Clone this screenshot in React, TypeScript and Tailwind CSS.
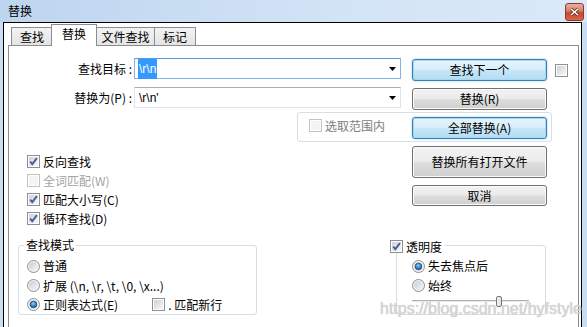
import React from "react";

const cjk = "font-['Noto_Sans_CJK_SC','Liberation_Sans',sans-serif]";

function CheckBox({ checked, disabled }: { checked?: boolean; disabled?: boolean }) {
  return (
    <svg width="13" height="13" viewBox="0 0 13 13" className="shrink-0 block">
      <rect x="0.5" y="0.5" width="12" height="12" fill="#fff" stroke={disabled ? "#c2c2c2" : "#8e8f8f"} />
      <rect x="2" y="2" width="9" height="9" fill={disabled ? "#f4f4f4" : "url(#cbIn)"} />
      {checked && (
        <path d="M3.2 6.6 L5.3 9.2 L9.9 3.2" stroke="#4a5f97" strokeWidth="1.9" fill="none" strokeLinejoin="miter" />
      )}
    </svg>
  );
}

function Radio({ checked }: { checked?: boolean }) {
  return (
    <svg width="13" height="13" viewBox="0 0 13 13" className="shrink-0 block">
      <circle cx="6.5" cy="6.5" r="6" fill="#f4f4f4" stroke="#8e8f8f" />
      <circle cx="6.5" cy="6.5" r="4.6" fill="url(#rbIn)" />
      {checked && <circle cx="6.5" cy="6.5" r="3.3" fill="url(#rbDot)" stroke="#1b4a78" strokeWidth="0.8" />}
    </svg>
  );
}

function Btn({ children, h, focus }: { children: React.ReactNode; h: string; focus?: boolean }) {
  return (
    <div
      className={`w-[135px] ${h} shrink-0 rounded-[3px] border flex items-center justify-center text-[12px] leading-none text-black ${
        focus
          ? "border-[#3c7fb1] bg-[linear-gradient(#e6f4fc_0%,#d8eefb_48%,#c6e6f8_52%,#b3dcf3_100%)] shadow-[inset_0_0_0_1px_#a6d8f4,0_0_2px_#7fc3ee]"
          : "border-[#707070] bg-[linear-gradient(#f2f2f2_0%,#ebebeb_48%,#dddddd_52%,#cfcfcf_100%)] shadow-[inset_0_0_0_1px_#fbfbfb]"
      }`}
    >
      {children}
    </div>
  );
}

function Combo({ focus, children }: { focus?: boolean; children: React.ReactNode }) {
  return (
    <div
      className={`ml-[1px] w-[267px] h-[21px] shrink-0 flex items-center bg-white border ${
        focus
          ? "border-[#7eb4ea] border-t-[#569de5]"
          : "border-[#e2e3ea] border-t-[#abadb3]"
      }`}
    >
      <div className="flex-1 pl-[3px] text-[12px] leading-none font-['Liberation_Sans',sans-serif]">{children}</div>
      <svg width="7" height="4" viewBox="0 0 7 4" className="mr-[4px] block">
        <path d="M0 0 H7 L3.5 4 Z" fill="#000" />
      </svg>
    </div>
  );
}

function CheckRow({ label, checked, disabled }: { label: React.ReactNode; checked?: boolean; disabled?: boolean }) {
  return (
    <div className="h-[19px] flex items-center">
      <CheckBox checked={checked} disabled={disabled} />
      <span className={`ml-[3px] text-[12px] leading-none ${disabled ? "text-[#a3a3a3]" : "text-black"}`}>{label}</span>
    </div>
  );
}

export default function App() {
  return (
    <div className={`relative w-[587px] h-[327px] overflow-hidden bg-[#c9ddf3] ${cjk}`}>
      <svg width="0" height="0" className="absolute">
        <defs>
          <linearGradient id="cbIn" x1="0" y1="0" x2="1" y2="1">
            <stop offset="0" stopColor="#cdd1d7" />
            <stop offset="1" stopColor="#f7f7f7" />
          </linearGradient>
          <linearGradient id="rbIn" x1="0" y1="0" x2="1" y2="1">
            <stop offset="0" stopColor="#c9ccd1" />
            <stop offset="1" stopColor="#f8f8f8" />
          </linearGradient>
          <radialGradient id="rbDot" cx="0.45" cy="0.35" r="0.7">
            <stop offset="0" stopColor="#8fd4fa" />
            <stop offset="0.6" stopColor="#2a7cc4" />
            <stop offset="1" stopColor="#15538f" />
          </radialGradient>
        </defs>
      </svg>

      {/* Title bar */}
      <div className="h-[22px] flex items-start bg-[linear-gradient(to_right,#bed5ef,#d3e4f6_60%,#dbe9f8)]">
        <span className="ml-[8px] mt-[3px] text-[12px] leading-[16px] text-black">替换</span>
        <div className="ml-auto mr-[3px] mt-[3px] w-[19px] h-[18px] rounded-[3px] border border-[#8a3a2a] bg-[linear-gradient(#eab1a2_0%,#d87a62_45%,#c7452f_55%,#d8684a_100%)] flex items-center justify-center">
          <svg width="9" height="8" viewBox="0 0 9 8" className="block">
            <path d="M1 1 L8 7 M8 1 L1 7" stroke="#5a2a20" strokeWidth="3" />
            <path d="M1 1 L8 7 M8 1 L1 7" stroke="#fff" strokeWidth="1.6" />
          </svg>
        </div>
      </div>

      {/* Client area */}
      <div className="ml-[3px] w-[579px] h-[310px] border-l border-r border-t border-black bg-white">
        {/* Tabs */}
        <div className="mt-[1px] h-[21px] pl-[7px] flex items-end">
          <div className="w-[41px] h-[18px] border-l border-t border-[#898c95] bg-[linear-gradient(#f3f3f3,#e4e4e4)] flex items-center justify-center text-[12px] leading-none">
            查找
          </div>
          <div className="relative z-10 -mb-px -ml-px w-[46px] h-[22px] border-l border-t border-r border-[#898c95] bg-white flex items-start justify-center pt-[3px] text-[12px] leading-none">
            替换
          </div>
          <div className="w-[58px] h-[18px] border-t border-r border-[#898c95] bg-[linear-gradient(#f3f3f3,#e4e4e4)] flex items-center justify-center text-[12px] leading-none">
            文件查找
          </div>
          <div className="w-[41px] h-[18px] border-t border-r border-[#898c95] bg-[linear-gradient(#f3f3f3,#e4e4e4)] flex items-center justify-center text-[12px] leading-none">
            标记
          </div>
        </div>

        {/* Tab panel */}
        <div className="ml-[4px] w-[571px] h-[300px] border border-[#898c95] bg-white">
          {/* Row A */}
          <div className="mt-[12px] h-[23px] flex items-start">
            <div className="w-[124px] h-[21px] flex items-center justify-end text-[12px] leading-none pr-[1px]">查找目标 :</div>
            <Combo focus>
              <span className="bg-[#3399ff] text-white px-[1px] py-[3px]">\r\n</span>
            </Combo>
            <div className="ml-[11px] mt-[1px]">
              <Btn h="h-[22px]" focus>查找下一个</Btn>
            </div>
            <div className="ml-[8px] mt-[6px]">
              <CheckBox />
            </div>
          </div>

          {/* Row B */}
          <div className="mt-[6px] h-[23px] flex items-start">
            <div className="w-[124px] h-[21px] flex items-center justify-end text-[12px] leading-none pr-[1px]">替换为(P) :</div>
            <Combo>
              <span className="pl-[1px]">\r\n'</span>
            </Combo>
            <div className="ml-[11px] mt-[1px]">
              <Btn h="h-[22px]">替换(R)</Btn>
            </div>
          </div>

          {/* Row C: in selection group */}
          <div className="mt-[2px] ml-[288px] w-[255px] h-[30px] rounded-[3px] border border-[#d5dfe5] flex items-start pt-[4px]">
            <div className="ml-[11px] mt-[2px] flex items-center">
              <CheckBox disabled />
              <span className="ml-[3px] text-[12px] leading-none text-[#7d7d7d]">选取范围内</span>
            </div>
            <div className="ml-auto mr-[4px]">
              <Btn h="h-[22px]" focus>全部替换(A)</Btn>
            </div>
          </div>

          {/* Middle */}
          <div className="h-[96px] flex items-start">
            <div className="w-[403px] pl-[18px] pt-[10px]">
              <CheckRow checked label="反向查找" />
              <CheckRow disabled label="全词匹配(W)" />
              <CheckRow checked label="匹配大小写(C)" />
              <CheckRow checked label="循环查找(D)" />
            </div>
            <div className="pt-[4px] flex flex-col">
              <Btn h="h-[32px]">替换所有打开文件</Btn>
              <div className="mt-[7px]">
                <Btn h="h-[21px]">取消</Btn>
              </div>
            </div>
          </div>

          {/* Bottom groups */}
          <div className="flex items-start">
            <div className="relative ml-[9px] mt-[7px] w-[239px] h-[70px] rounded-[3px] border border-[#d5dfe5] pl-[8px] pt-[10px]">
              <span className="absolute -top-[8px] left-[5px] px-[2px] bg-white text-[12px] leading-[14px]">查找模式</span>
              <div className="h-[20px] flex items-center">
                <Radio />
                <span className="ml-[3px] text-[12px] leading-none">普通</span>
              </div>
              <div className="h-[19px] flex items-center">
                <Radio />
                <span className="ml-[3px] text-[12px] leading-none">扩展 (\n, \r, \t, \0, \x...)</span>
              </div>
              <div className="h-[19px] flex items-center">
                <Radio checked />
                <span className="ml-[3px] text-[12px] leading-none">正则表达式(E)</span>
                <div className="ml-[34px]">
                  <CheckBox />
                </div>
                <span className="ml-[3px] text-[12px] leading-none">. 匹配新行</span>
              </div>
            </div>

            <div className="relative ml-[139px] mt-[7px] w-[150px] h-[70px] rounded-[3px] border border-[#d5dfe5] pl-[15px] pt-[10px]">
              <div className="absolute -top-[6px] -left-[7px] pr-[2px] bg-white flex items-center">
                <CheckBox checked />
                <span className="ml-[3px] text-[12px] leading-none">透明度</span>
              </div>
              <div className="h-[20px] flex items-center">
                <Radio checked />
                <span className="ml-[3px] text-[12px] leading-none">失去焦点后</span>
              </div>
              <div className="h-[19px] flex items-center">
                <Radio />
                <span className="ml-[3px] text-[12px] leading-none">始终</span>
              </div>
              <div className="relative mt-[1px] w-[117px] h-[11px]">
                <div className="absolute left-0 right-0 top-[4px] h-[2px] bg-[#e7eaea] border-t border-[#b0b0b0]" />
                <div className="absolute left-[84px] top-0 w-[6px] h-[11px] rounded-[2px] border border-[#767676] bg-[linear-gradient(to_right,#f5f5f5,#dcdcdc)]" />
              </div>
            </div>
          </div>
        </div>
      </div>

      {/* Watermark */}
      <div className="absolute left-[380px] top-[299px] text-[16px] leading-[20px] text-[#d6d6d6] font-['Liberation_Sans',sans-serif] [text-shadow:0_0_1px_#bdbdbd]">
        https://blog.csdn.net/hyfstyle
      </div>
    </div>
  );
}
